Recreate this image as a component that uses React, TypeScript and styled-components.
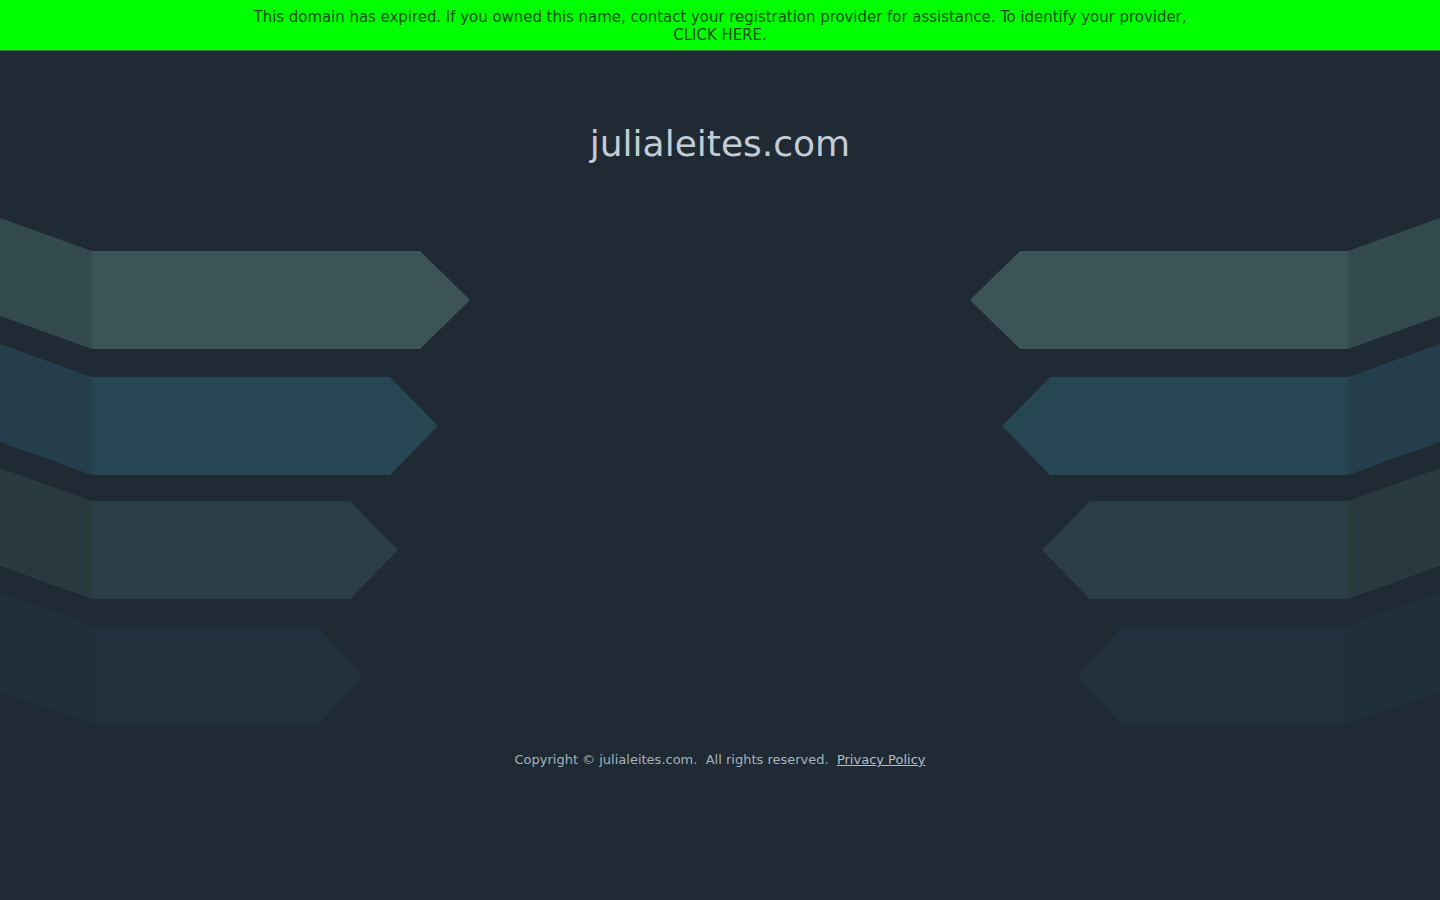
import React from "react";
import styled, { createGlobalStyle } from "styled-components";

const GlobalStyle = createGlobalStyle`
  html, body {
    margin: 0;
    padding: 0;
    background: #1f2a35;
  }
  * {
    box-sizing: border-box;
  }
`;

type Arrow = {
  top: number;
  sideX: number;
  tail: number;
  tip: number;
  main: string;
  side: string;
};

// y values are relative to the top of the stage
const arrows: Arrow[] = [
  { top: 41, sideX: 92, tail: 420, tip: 470, main: "#3c5458", side: "#334a4f" },
  { top: 167, sideX: 92, tail: 390, tip: 438, main: "#274653", side: "#243f4b" },
  { top: 291, sideX: 92, tail: 350, tip: 398, main: "#2b3d46", side: "#28393f" },
  { top: 417, sideX: 97, tail: 319, tip: 363, main: "#21303c", side: "#20303b" },
];

const ArrowStack: React.FC<{ flip?: boolean }> = ({ flip }) => (
  <ArtSvg width="480" height="530" viewBox="0 0 480 530">
    <g transform={flip ? "translate(480 0) scale(-1 1)" : undefined}>
      {arrows.map((a, i) => {
        const h = 98;
        const bottom = a.top + h;
        const mid = a.top + h / 2;
        return (
          <g key={i}>
            <polygon
              points={`0,${a.top - 33} ${a.sideX},${a.top} ${a.sideX},${bottom} 0,${bottom - 33}`}
              fill={a.side}
            />
            <polygon
              points={`${a.sideX},${a.top} ${a.tail},${a.top} ${a.tip},${mid} ${a.tail},${bottom} ${a.sideX},${bottom}`}
              fill={a.main}
            />
          </g>
        );
      })}
    </g>
  </ArtSvg>
);

const App: React.FC = () => {
  return (
    <Page>
      <GlobalStyle />
      <Banner>
        <BannerText>
          This domain has expired. If you owned this name, contact your registration provider for
          assistance. To identify your provider,
          <br />
          CLICK HERE.
        </BannerText>
      </Banner>
      <Header>
        <Title>julialeites.com</Title>
      </Header>
      <Stage>
        <ArrowStack />
        <ArrowStack flip />
      </Stage>
      <Footer>
        Copyright © julialeites.com.&nbsp; All rights reserved.&nbsp; <FooterLink href="#">Privacy Policy</FooterLink>
      </Footer>
    </Page>
  );
};

export default App;

const Page = styled.div`
  min-height: 100vh;
  background: #1f2a35;
  font-family: "DejaVu Sans", Verdana, sans-serif;
  display: flex;
  flex-direction: column;
`;

const Banner = styled.div`
  height: 51px;
  padding-top: 2px;
  background: #00ff00;
  display: flex;
  align-items: center;
  justify-content: center;
  border-bottom: 1px solid #3d7a3d;
`;

const BannerText = styled.p`
  margin: 0;
  text-align: center;
  font-family: "DejaVu Sans Condensed", "DejaVu Sans", sans-serif;
  font-stretch: condensed;
  font-size: 16.6px;
  line-height: 18px;
  color: #1b4a1b;
  cursor: pointer;
`;

const Header = styled.header`
  padding-top: 70px;
  height: 159px;
  text-align: center;
`;

const Title = styled.h1`
  margin: 0;
  font-size: 36px;
  font-weight: 400;
  line-height: 46px;
  color: #c3ccd4;
`;

const Stage = styled.div`
  height: 530px;
  display: flex;
  justify-content: space-between;
`;

const ArtSvg = styled.svg`
  display: block;
  flex-shrink: 0;
`;

const Footer = styled.footer`
  margin-top: 11px;
  text-align: center;
  font-size: 13px;
  line-height: 18px;
  color: #a6b2bc;
`;

const FooterLink = styled.a`
  color: #b2bdc6;
  text-decoration: underline;
`;
